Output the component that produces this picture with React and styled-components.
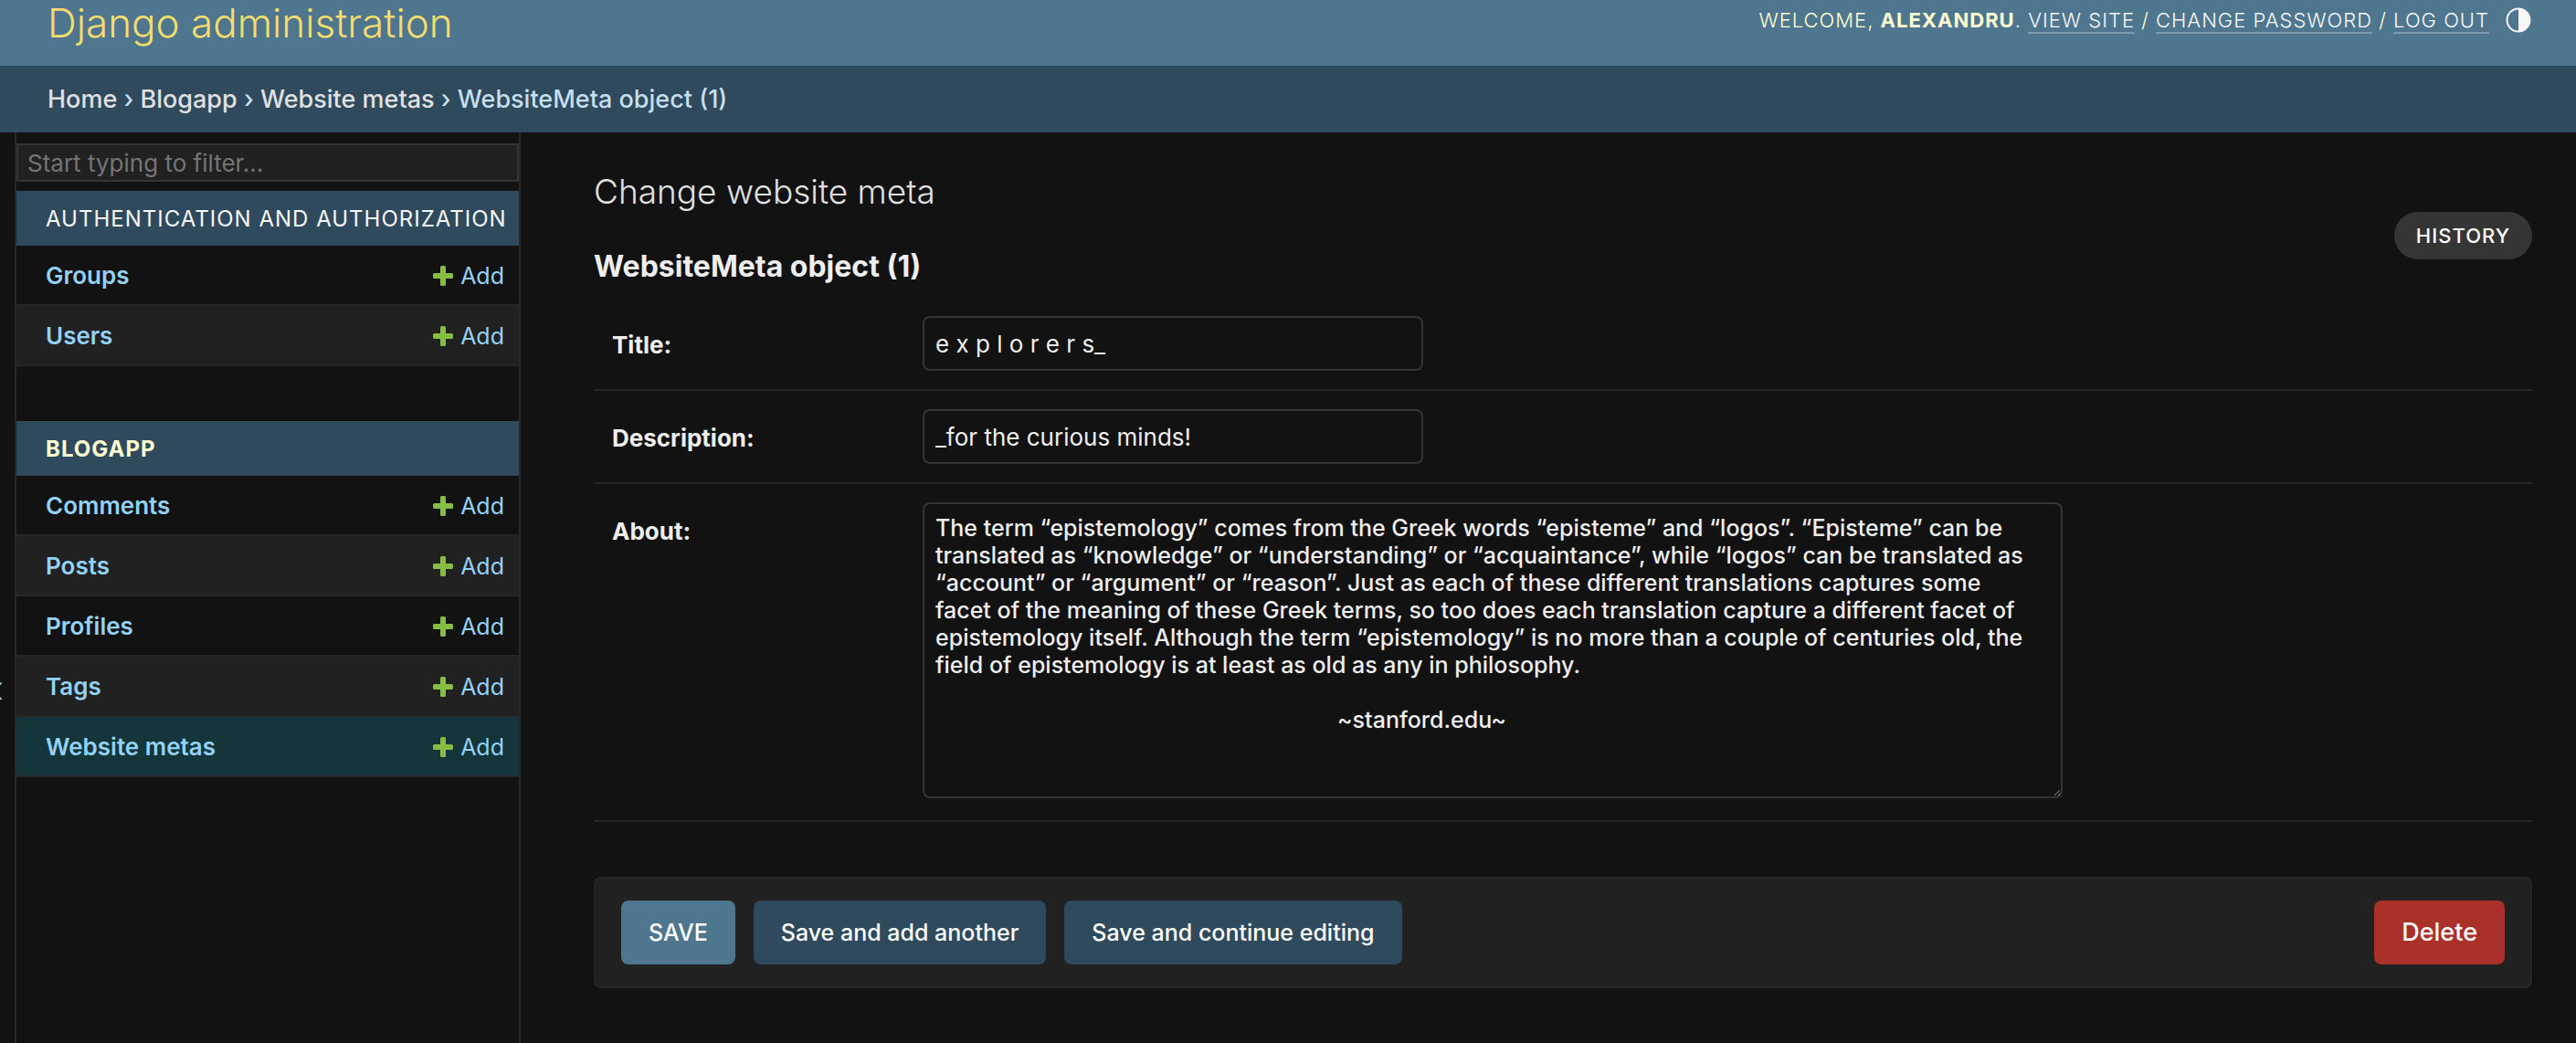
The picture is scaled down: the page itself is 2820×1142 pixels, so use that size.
import React from "react";
import styled, { createGlobalStyle, css } from "styled-components";

const c = {
  primary: "#4e768f",
  secondary: "#2f4a5c",
  body: "#121212",
  dark: "#212121",
  hairline: "#272727",
  border: "#353535",
  text: "#eeeeee",
  quiet: "#e0e0e0",
  link: "#92d2f8",
  selected: "#143539",
  cream: "#ffffd2",
};

const GlobalStyle = createGlobalStyle`
  *, *::before, *::after { box-sizing: border-box; }
  body {
    margin: 0;
    background: ${c.body};
    color: ${c.text};
    font-family: Inter, "Liberation Sans", sans-serif;
    font-size: 26px;
  }
  a { text-decoration: none; }
  input, textarea, button { font-family: inherit; }
`;

const Page = styled.div`
  display: flex;
  flex-direction: column;
  min-height: 100vh;
`;

const Header = styled.header`
  display: flex;
  justify-content: space-between;
  align-items: flex-start;
  padding: 0 49px 22px 52px;
  background: ${c.primary};
  color: ${c.cream};
`;

const SiteName = styled.a`
  color: #f4dd6c;
  font-size: 44px;
  font-weight: 300;
  line-height: 50px;
`;

const UserTools = styled.div`
  display: flex;
  align-items: center;
  font-size: 22px;
  font-weight: 300;
  letter-spacing: 1px;
  line-height: 26px;
  padding-top: 8px;
  text-transform: uppercase;
  white-space: pre;

  strong { font-weight: 700; }
  a {
    color: #f7f7f7;
    border-bottom: 2px solid #809bac;
  }
`;

const ThemeButton = styled.button`
  display: flex;
  margin-left: 18px;
  padding: 0;
  border: 0;
  background: none;
  color: #f7f7f7;
`;

const Breadcrumbs = styled.nav`
  padding: 21px 50px 20px 52px;
  background: ${c.secondary};
  color: #c4dfee;
  font-size: 27px;
  font-weight: 500;
  line-height: 32px;
  a { color: ${c.quiet}; }
`;

const Main = styled.div`
  display: flex;
  flex: 1;
`;

const Toggle = styled.button`
  display: flex;
  align-items: flex-start;
  justify-content: flex-end;
  flex: none;
  width: 16px;
  padding: 590px 12px 0 0;
  overflow: hidden;
  border: 0;
  background: none;
  color: ${c.link};
  font-size: 40px;
  line-height: 40px;
`;

const Sidebar = styled.nav`
  flex: none;
  width: 554px;
  padding-top: 12px;
  border: solid ${c.hairline};
  border-width: 0 2px;
`;

const Filter = styled.input`
  display: block;
  width: 100%;
  height: 42px;
  margin-bottom: 10px;
  padding: 0 10px;
  border: 2px solid ${c.border};
  border-radius: 0;
  background: ${c.dark};
  color: ${c.text};
  font-size: 26px;
  &::placeholder { color: #757575; opacity: 1; }
`;

const Module = styled.table`
  width: 100%;
  margin-bottom: 60px;
  border-collapse: separate;
  border-spacing: 0;
`;

const Caption = styled.caption`
  padding: 2px 0 0 32px;
  background: ${c.secondary};
  font-size: 24px;
  letter-spacing: 1px;
  line-height: 58px;
  text-align: left;
  text-transform: uppercase;
  white-space: nowrap;
  a {
    color: ${(p) => (p.$current ? c.cream : "#f7f7f7")};
    font-weight: ${(p) => (p.$current ? 700 : 400)};
  }
`;

const Row = styled.tr`
  height: 66px;
  background: ${(p) => (p.$current ? c.selected : c.body)};
  ${(p) => !p.$current && css`&:nth-child(even) { background: ${c.dark}; }`}
  th, td {
    padding: 2px 0 0;
    border-bottom: 2px solid ${c.hairline};
    line-height: 32px;
  }
  th { padding-left: 32px; text-align: left; font-weight: 600; }
  td { padding-right: 16px; font-size: 25px; }
  a { color: ${c.link}; }
`;

const AddLink = styled.a`
  display: flex;
  align-items: center;
  justify-content: flex-end;
  gap: 8px;
`;

const Content = styled.main`
  flex: 1;
  min-width: 0;
  padding: 40px 48px 60px 80px;
`;

const TitleBar = styled.div`
  display: flex;
  justify-content: space-between;
  align-items: flex-end;
  margin-bottom: 14px;
`;

const Title = styled.h1`
  margin: 0 0 37px;
  color: ${c.quiet};
  font-size: 37px;
  font-weight: 300;
  line-height: 50px;
`;

const Subtitle = styled.h2`
  margin: 0;
  font-size: 32px;
  font-weight: 700;
  line-height: 40px;
`;

const History = styled.a`
  margin-bottom: 28px;
  padding: 0 24px;
  border-radius: 26px;
  background: ${c.border};
  color: #ffffff;
  font-size: 22px;
  font-weight: 500;
  letter-spacing: 1px;
  line-height: 52px;
  text-transform: uppercase;
`;

const FormRow = styled.div`
  display: flex;
  align-items: flex-start;
  padding: 20px 20px ${(p) => (p.$tall ? 24 : 20)}px;
  border-bottom: 2px solid ${c.hairline};
  height: ${(p) => (p.$tall ? "auto" : "102px")};
`;

const Label = styled.label`
  flex: none;
  width: 340px;
  font-weight: 700;
  line-height: 64px;
`;

const field = css`
  border: 2px solid ${c.border};
  border-radius: 8px;
  background: ${c.body};
  color: ${c.text};
  outline: none;
`;

const TextInput = styled.input`
  ${field}
  width: 548px;
  height: 60px;
  padding: 0 12px;
  font-size: 26px;
`;

const TextArea = styled.textarea`
  ${field}
  width: 1248px;
  max-width: 100%;
  height: 324px;
  padding: 11px 4px 9px 12px;
  font-size: 25px;
  font-weight: 500;
  line-height: 30px;
  color-scheme: dark;
`;

const SubmitRow = styled.div`
  display: flex;
  gap: 20px;
  margin-top: 60px;
  padding: 24px 28px;
  border: 2px solid ${c.hairline};
  border-radius: 8px;
  background: ${c.dark};
`;

const Button = styled.button`
  height: 70px;
  padding: 0 30px;
  border: 0;
  border-radius: 8px;
  background: ${(p) => (p.$main ? c.primary : c.secondary)};
  color: #ffffff;
  font-size: 25px;
  font-weight: 500;
`;

const DeleteLink = styled.a`
  margin-left: auto;
  padding: 0 30px;
  border-radius: 8px;
  background: #aa302a;
  color: #ffffff;
  font-size: 27px;
  font-weight: 500;
  line-height: 70px;
`;

const Plus = () => (
  <svg width="22" height="22" viewBox="0 0 22 22" aria-hidden="true">
    <path fill="#86bd47" d="M9.500 0h3q1.500 0 1.500 1.500V8h6.500q1.500 0 1.500 1.500v3q0 1.500-1.500 1.500H14v6.500q0 1.500-1.500 1.500h-3Q8 22 8 20.500V14H1.500Q0 14 0 12.500v-3Q0 8 1.500 8H8V1.500Q8 0 9.500 0Z" />
  </svg>
);

const apps = [
  { name: "Authentication and Authorization", models: ["Groups", "Users"] },
  { name: "Blogapp", current: true, models: ["Comments", "Posts", "Profiles", "Tags", "Website metas"] },
];

const about = [
  "The term “epistemology” comes from the Greek words “episteme” and “logos”. “Episteme” can be",
  "translated as “knowledge” or “understanding” or “acquaintance”, while “logos” can be translated as",
  "“account” or “argument” or “reason”. Just as each of these different translations captures some",
  "facet of the meaning of these Greek terms, so too does each translation capture a different facet of",
  "epistemology itself. Although the term “epistemology” is no more than a couple of centuries old, the",
  "field of epistemology is at least as old as any in philosophy.",
  "",
  " ".repeat(66) + "~stanford.edu~",
].join("\n");

export default function App() {
  return (
    <Page>
      <GlobalStyle />
      <Header>
        <SiteName href="#">Django administration</SiteName>
        <UserTools>
          <span>
            Welcome, <strong>Alexandru</strong>. <a href="#">View site</a> / <a href="#">Change password</a> / <a href="#">Log out</a>
          </span>
          <ThemeButton aria-label="Toggle theme">
            <svg width="28" height="28" viewBox="0 0 28 28" aria-hidden="true">
              <circle cx="14" cy="14" r="12.500" fill="none" stroke="currentColor" strokeWidth="2" />
              <path d="M14 1.500a12.500 12.500 0 0 1 0 25Z" fill="currentColor" />
            </svg>
          </ThemeButton>
        </UserTools>
      </Header>
      <Breadcrumbs>
        <a href="#">Home</a> › <a href="#">Blogapp</a> › <a href="#">Website metas</a> › WebsiteMeta object (1)
      </Breadcrumbs>
      <Main>
        <Toggle aria-label="Toggle navigation">«</Toggle>
        <Sidebar>
          <Filter type="search" placeholder="Start typing to filter..." aria-label="Filter navigation items" />
          {apps.map((app) => (
            <Module key={app.name}>
              <Caption $current={app.current}>
                <a href="#">{app.name}</a>
              </Caption>
              <tbody>
                {app.models.map((m) => (
                  <Row key={m} $current={m === "Website metas"}>
                    <th scope="row"><a href="#">{m}</a></th>
                    <td><AddLink href="#"><Plus />Add</AddLink></td>
                  </Row>
                ))}
              </tbody>
            </Module>
          ))}
        </Sidebar>
        <Content>
          <TitleBar>
            <div>
              <Title>Change website meta</Title>
              <Subtitle>WebsiteMeta object (1)</Subtitle>
            </div>
            <History href="#">History</History>
          </TitleBar>
          <form onSubmit={(e) => e.preventDefault()}>
            <FormRow>
              <Label htmlFor="id_title">Title:</Label>
              <TextInput id="id_title" type="text" defaultValue="e x p l o r e r s_" />
            </FormRow>
            <FormRow>
              <Label htmlFor="id_description">Description:</Label>
              <TextInput id="id_description" type="text" defaultValue="_for the curious minds!" />
            </FormRow>
            <FormRow $tall>
              <Label htmlFor="id_about">About:</Label>
              <TextArea id="id_about" defaultValue={about} />
            </FormRow>
            <SubmitRow>
              <Button type="submit" $main>SAVE</Button>
              <Button type="submit">Save and add another</Button>
              <Button type="submit">Save and continue editing</Button>
              <DeleteLink href="#">Delete</DeleteLink>
            </SubmitRow>
          </form>
        </Content>
      </Main>
    </Page>
  );
}
